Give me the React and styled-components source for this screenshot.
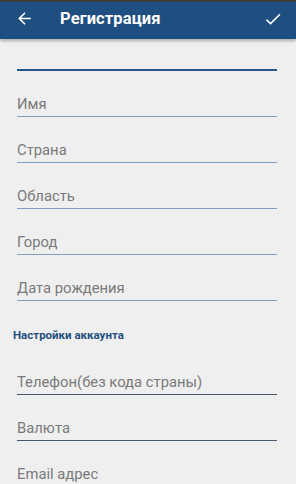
import React from "react";
import styled, { createGlobalStyle } from "styled-components";

const Global = createGlobalStyle`
  html, body { margin: 0; padding: 0; background: #efefef; }
  body { font-family: Roboto, "Noto Sans", sans-serif; overflow: hidden; }
`;

const Screen = styled.div`
  width: 296px;
  height: 484px;
  overflow: hidden;
  background: #efefef;
  display: flex;
  flex-direction: column;
`;

const StatusStrip = styled.div`
  height: 2px;
  background: #3b3b3b;
  flex: none;
`;

const Toolbar = styled.header`
  height: 37px;
  background: #1f4f80;
  display: flex;
  align-items: center;
  padding: 0 13px 4px 14px;
  box-sizing: border-box;
  color: #fff;
  box-shadow: 0 2px 3px rgba(0, 0, 0, 0.28);
  position: relative;
  z-index: 1;
  flex: none;
`;

const IconBtn = styled.div`
  width: 20px;
  height: 20px;
  display: flex;
  align-items: center;
  justify-content: center;
  flex: none;
`;

const Title = styled.h1`
  margin: 0 0 0 26px;
  font-size: 16.5px;
  font-weight: 700;
  letter-spacing: 0.1px;
  flex: 1;
`;

const Form = styled.div`
  display: flex;
  flex-direction: column;
  padding: 0 19px 0 17px;
  margin-top: -14px;
`;

const Field = styled.div`
  height: 46px;
  box-sizing: border-box;
  display: flex;
  align-items: flex-end;
  padding-bottom: 3px;
  border-bottom: ${(p) => (p.$focused ? "2px solid #26578a" : p.$dark ? "1px solid #48586b" : "1px solid #809dc2")};
  font-size: 14.8px;
  color: #7a7a7a;
  line-height: 18px;
`;

const Section = styled.div`
  height: 48px;
  display: flex;
  align-items: flex-end;
  padding-bottom: 7px;
  box-sizing: border-box;
  margin-left: -4px;
  font-size: 11.5px;
  font-weight: 700;
  color: #1f4f80;
`;

const BackIcon = () => (
  <svg width="19" height="19" viewBox="0 0 24 24" fill="#fff">
    <path d="M20 11H7.83l5.59-5.59L12 4l-8 8 8 8 1.41-1.41L7.83 13H20v-2z" />
  </svg>
);

const CheckIcon = () => (
  <svg width="20" height="20" viewBox="0 0 24 24" fill="#fff">
    <path d="M9 16.17L4.83 12l-1.42 1.41L9 19 21 7l-1.41-1.41z" />
  </svg>
);

export default function App() {
  return (
    <>
      <Global />
      <Screen>
        <StatusStrip />
        <Toolbar>
          <IconBtn><BackIcon /></IconBtn>
          <Title>Регистрация</Title>
          <IconBtn><CheckIcon /></IconBtn>
        </Toolbar>
        <Form>
          <Field $focused />
          <Field>Имя</Field>
          <Field>Страна</Field>
          <Field>Область</Field>
          <Field>Город</Field>
          <Field>Дата рождения</Field>
          <Section>Настройки аккаунта</Section>
          <Field $dark>Телефон(без кода страны)</Field>
          <Field $dark>Валюта</Field>
          <Field>Email адрес</Field>
        </Form>
      </Screen>
    </>
  );
}
